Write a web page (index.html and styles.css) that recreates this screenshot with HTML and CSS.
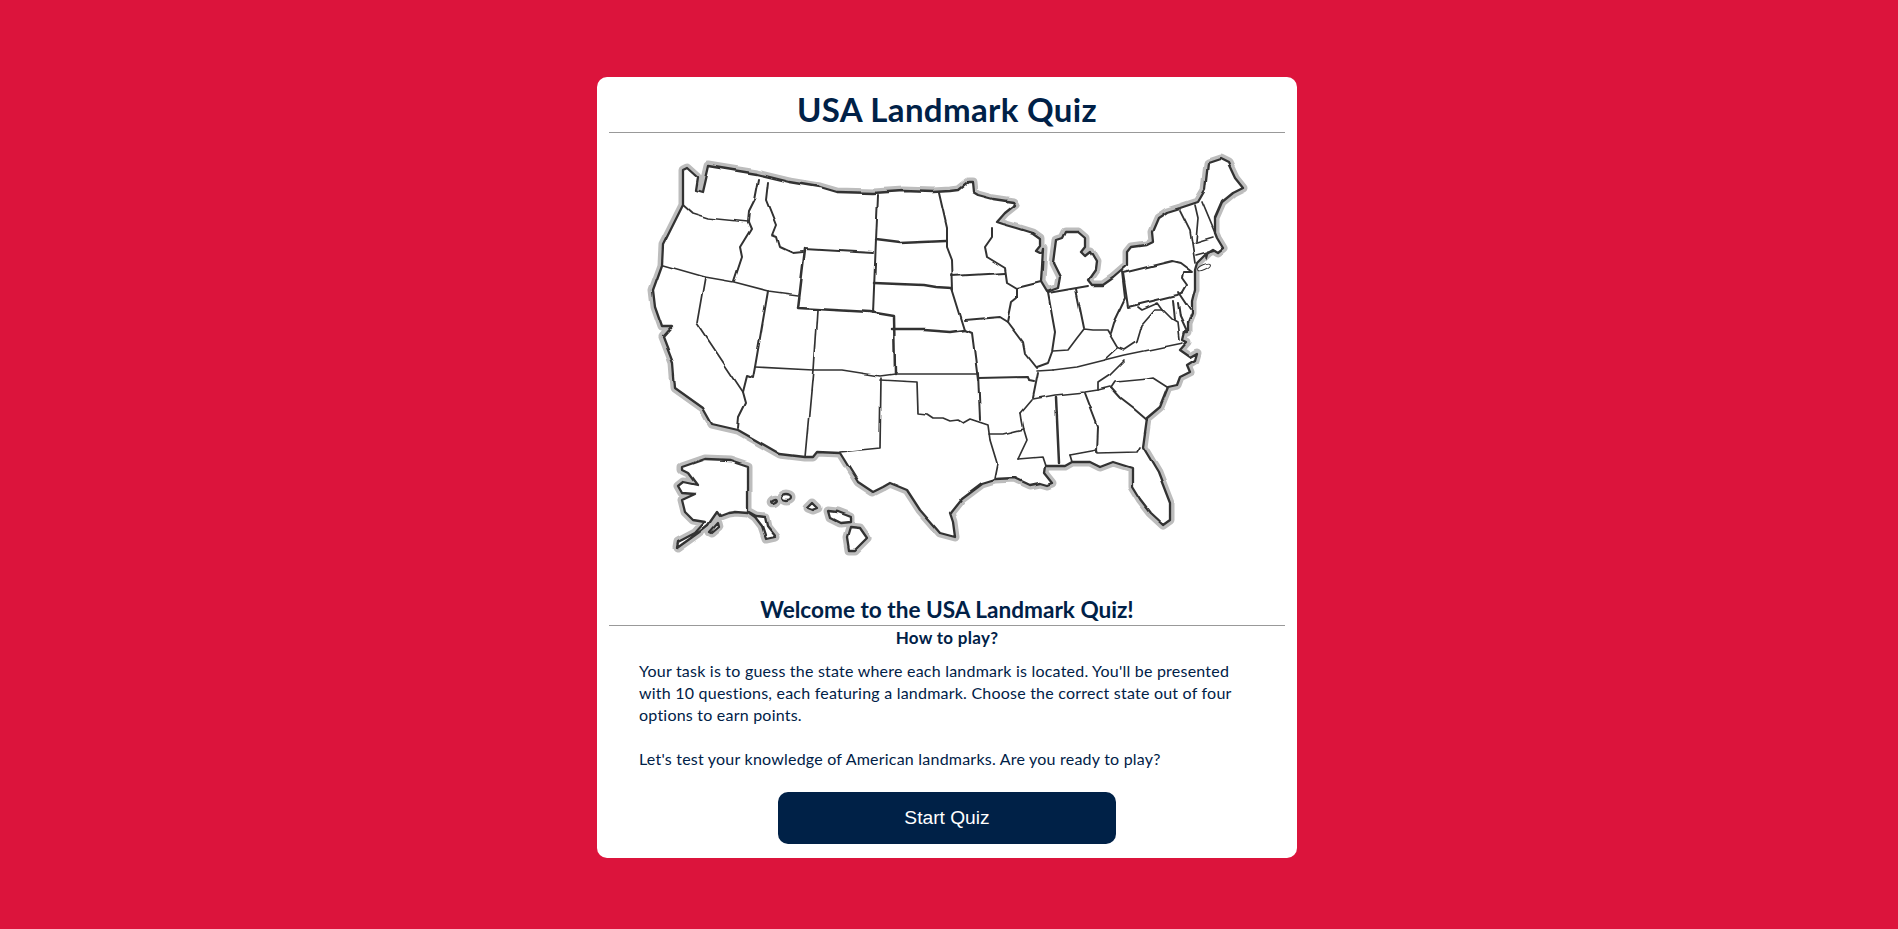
FILE: index.html
```html
<!DOCTYPE html>
<html lang="en">

<head>
    <meta charset="UTF-8">
    <meta name="viewport" content="width=device-width, initial-scale=1.0">
    <title>USA Landmark Quiz</title>
    <link rel="stylesheet" href="styles.css">
</head>

<body>
    <main class="card">
        <h1 class="title">USA Landmark Quiz</h1>
        <svg class="map" viewBox="609 133 676 462" role="img" aria-label="Outline map of the United States">
            <defs>
                <filter id="soft" filterUnits="userSpaceOnUse" x="609" y="133" width="676" height="462">
                    <feGaussianBlur stdDeviation="0.7"/>
                </filter>
                <!-- wobble the straight segments so the lines look hand drawn -->
                <filter id="sketch" filterUnits="userSpaceOnUse" x="609" y="133" width="676" height="462">
                    <feTurbulence type="fractalNoise" baseFrequency="0.035" numOctaves="1" seed="4" result="noise"/>
                    <feDisplacementMap in="SourceGraphic" in2="noise" scale="4" xChannelSelector="R" yChannelSelector="G"/>
                    <feGaussianBlur stdDeviation="0.45"/>
                </filter>
                <g id="coast">
                    <!-- lower 48 -->
                    <path d="M708 166L757 174L790 182L820 187L837 192L873 193L903 191L933 192L950 191L958 190L968 182L972 182L973 192L978 195L993 199L1013 202L1015 205L1005 213L997 222L1003 224L1017 228L1033 233L1040 238L1040 245L1036 250L1042 253L1043 248L1042 267L1041 282L1047 292L1058 288L1060 277L1053 263L1056 240L1062 238L1065 232L1078 232L1085 238L1085 247L1081 252L1085 256L1090 252L1096 262L1095 270L1088 280L1092 285L1103 285L1113 278L1128 265L1128 252L1132 247L1147 245L1153 242L1152 232L1158 218L1167 212L1180 208L1198 202L1205 190L1208 163L1220 159L1228 163L1235 178L1243 188L1233 193L1222 202L1215 218L1215 233L1217 238L1223 248L1218 252L1213 249L1208 252L1197 263L1195 270L1195 290L1192 302L1192 313L1188 323L1188 332L1185 332L1183 340L1187 342L1180 350L1190 357L1197 353L1195 360L1187 365L1190 372L1180 377L1177 385L1168 387L1160 407L1147 418L1143 447L1158 472L1170 503L1170 520L1163 525L1150 513L1140 500L1132 487L1132 468L1113 462L1100 467L1090 462L1072 462L1065 466L1045 466L1044 473L1052 483L1047 485L1040 483L1030 485L1015 478L995 479L982 483L962 498L950 513L953 522L955 537L940 533L920 510L907 490L890 483L883 487L873 492L858 482L840 453L817 452L813 457L805 457L780 454L738 430L712 424L703 408L675 388L673 363L663 337L672 327L662 327L655 307L653 290L662 265L663 245L683 205L683 192L683 170L687 168L697 177L695 190L702 192Z"/>
                    <!-- alaska -->
                    <path d="M682 467L705 459L730 460L748 466L748 512L757 517L765 518L767 527L775 537L766 539L762 527L755 518L748 513L735 512L728 513L720 516L717 512L708 525L698 533L677 548L678 542L695 533L705 522L693 520L685 512L682 500L695 494L682 493L678 486L683 482L697 485L688 473L682 470Z"/>
                    <path d="M710 532L718 523L719 527L712 533Z"/>
                    <!-- hawaii -->
                    <ellipse cx="787" cy="497" rx="5" ry="3"/>
                    <ellipse cx="774" cy="501" rx="3" ry="1.5" transform="rotate(-25 774 501)"/>
                    <path d="M808 508L813 503L818 508L813 510Z"/>
                    <path d="M828 511L837 512L850 517L850 522L840 523L830 518Z"/>
                    <path d="M850 527L860 528L867 538L855 550L849 550L847 537Z"/>
                </g>
            </defs>
            <g class="map-art">
                <use href="#coast" class="map-glow"/>
                <use href="#coast" class="map-land"/>
                <ellipse class="map-island" cx="1204" cy="267" rx="7" ry="2.4" transform="rotate(-25 1204 267)"/>
                <g class="map-borders">
                    <path d="M683 205L692 213L708 218L748 222"/>
                    <path d="M663 265L705 277L734 282L768 291L798 295"/>
                    <path d="M705 277L697 323L743 392"/>
                    <path d="M813 370L805 457"/>
                    <path d="M817 311L813 370"/>
                    <path d="M755 367L813 370L842 370L880 376L895 374L960 374L978 374"/>
                    <path d="M989 434L1003 434L1024 429"/>
                    <path d="M1053 351L1068 350L1077 338L1084 329L1093 330L1107 330L1117 347L1125 350L1137 342L1142 325L1155 310L1163 310L1173 320L1178 323L1180 340"/>
                    <path d="M1138 307L1142 310L1158 303L1163 310"/>
                    <path d="M1180 210L1190 230L1195 263"/>
                    <path d="M1195 205L1198 218L1196 241"/>
                    <path d="M1202 202L1215 233"/>
                    <path d="M1193 243L1213 237"/>
                    <path d="M1196 255L1215 250"/>
                    <path d="M1208 251L1206 258"/>
                    <path d="M1053 370L1077 367L1105 360L1125 355L1183 343"/>
                    <path d="M1037 371L1053 370"/>
                    <path d="M1105 360L1118 348"/>
                    <path d="M1125 360L1110 375L1098 383L1098 390"/>
                    <path d="M1111 388L1115 382L1147 379L1153 378L1167 387"/>
                    <path d="M1033 399L1055 395L1085 392L1098 390L1110 387"/>
                    <path d="M1070 455L1097 450L1098 453L1137 452L1140 447"/>
                    <path d="M1070 455L1072 462"/>
                    <path d="M1018 459L1042 457L1045 466"/>
                    <path d="M1021 413L1022 420L1024 430L1027 440L1018 459"/>
                    <path d="M1032 400L1021 413"/>
                    <path d="M840 452L880 448L881 378"/>
                    <path d="M880 380L917 382L918 413L927 414L933 418L943 418L950 421L958 420L963 423L970 419L988 425L990 440L997 463L994 478"/>
                </g>
                <g class="map-borders map-borders-mid">
                    <path d="M759 179L755 200L749 212L748 222L751 229L740 247L742 257L734 281"/>
                    <path d="M768 291L755 367L753 378L747 376L743 392L746 403L739 417L738 428"/>
                    <path d="M768 182L766 200L776 225L772 235L777 237L780 247L793 253L803 252"/>
                    <path d="M805 249L873 253"/>
                    <path d="M878 195L876 240L873 313"/>
                    <path d="M939 193L947 228L947 247L952 260L953 290"/>
                    <path d="M952 276L1005 273"/>
                    <path d="M992 228L992 237L985 247L987 257L1005 268L1007 282L1017 288L1041 282"/>
                    <path d="M965 320L1000 317L1008 322"/>
                    <path d="M952 288L965 330"/>
                    <path d="M1017 288L1017 298L1012 302L1008 322L1023 342L1025 353L1037 368"/>
                    <path d="M1048 293L1055 332L1052 352L1048 363L1037 367"/>
                    <path d="M1076 289L1084 328"/>
                    <path d="M1048 293L1088 286"/>
                    <path d="M1122 272L1125 298L1113 323L1110 333"/>
                    <path d="M1123 273L1172 261L1180 263L1192 272L1183 272L1182 278L1187 285L1183 292L1177 295L1128 307Z"/>
                    <path d="M1173 300L1175 320M1178 303L1180 317L1187 332M1178 292L1190 310"/>
                    <path d="M1038 373L1033 398"/>
                    <path d="M1111 388L1120 398L1133 408L1147 420"/>
                    <path d="M1085 393L1098 427L1097 452"/>
                    <path d="M978 378L1028 377L1029 381L1034 382"/>
                    <path d="M980 420L978 373"/>
                    <path d="M965 330L972 333L978 380"/>
                </g>
                <g class="map-borders map-borders-thick">
                    <path d="M805 249L798 308L870 312L894 316L895 374"/>
                    <path d="M876 240L900 243L946 241"/>
                    <path d="M874 283L923 285L935 287L952 288"/>
                    <path d="M892 330L923 330L950 332L965 330"/>
                    <path d="M1056 397L1059 463"/>
                </g>
            </g>
        </svg>
        <h2 class="welcome">Welcome to the USA Landmark Quiz!</h2>
        <h3 class="how-to">How to play?</h3>
        <div class="intro">
            <p>Your task is to guess the state where each landmark is located. You'll be presented with 10 questions, each featuring a landmark. Choose the correct state out of four options to earn points.</p>
            <p>Let's test your knowledge of American landmarks. Are you ready to play?</p>
        </div>
        <button class="start-btn">Start Quiz</button>
    </main>
</body>

</html>
```

FILE: styles.css
```css
* {
    box-sizing: border-box;
}

body {
    margin: 0;
    min-height: 929px;
    padding: 77px 4px 0 0;
    background: #dc143c;
    color: #002147;
    font-family: "Lato", "Noto Sans", sans-serif;
}

.card {
    display: flex;
    flex-direction: column;
    width: 700px;
    margin: 0 auto;
    padding: 0 12px 14px;
    border-radius: 10px;
    background: #fff;
}

.title {
    margin: 0;
    padding-top: 10px;
    padding-bottom: 1px;
    border-bottom: 1px solid #999;
    font-size: 33px;
    line-height: 44px;
    font-weight: 700;
    letter-spacing: 0.35px;
    text-align: center;
}

.map {
    display: block;
    width: 676px;
    height: 462px;
}

.map-art {
    filter: url(#sketch);
}

.map-glow {
    fill: none;
    stroke: #bdbdbd;
    stroke-width: 9;
    stroke-linejoin: round;
    filter: url(#soft);
}

.map-land {
    fill: #fff;
    stroke: #333;
    stroke-width: 2.3;
    stroke-linejoin: round;
}

.map-island {
    fill: #fff;
    stroke: #333;
    stroke-width: 1;
}

.map-borders {
    fill: none;
    stroke: #333;
    stroke-width: 1.7;
    stroke-linejoin: round;
    stroke-linecap: round;
}

.map-borders-mid {
    stroke-width: 2;
}

.map-borders-thick {
    stroke-width: 2.5;
}

.welcome {
    margin: 0;
    border-bottom: 1px solid #999;
    font-size: 22.6px;
    line-height: 30px;
    font-weight: 700;
    text-align: center;
}

.how-to {
    margin: 0;
    font-size: 17px;
    line-height: 24px;
    font-weight: 700;
    letter-spacing: 0.3px;
    text-align: center;
}

.intro {
    margin-top: 10px;
    padding: 0 30px;
    font-size: 16px;
    line-height: 22px;
    letter-spacing: 0.22px;
}

.intro p {
    margin: 0 0 22px;
}

.start-btn {
    align-self: center;
    width: 338px;
    height: 52px;
    border: 0;
    border-radius: 10px;
    background: #002147;
    color: #fff;
    font: normal 19.2px "Liberation Sans", sans-serif;
}
```
